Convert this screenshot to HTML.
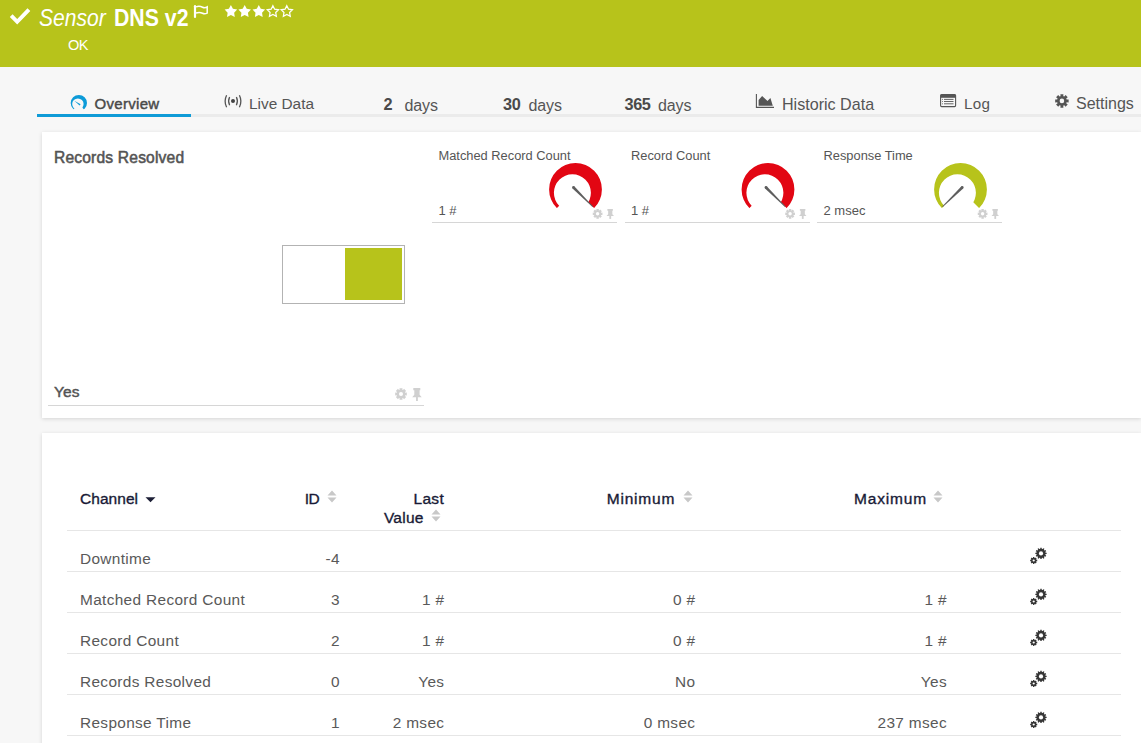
<!DOCTYPE html>
<html><head><meta charset="utf-8"><style>
html,body{margin:0;padding:0;width:1141px;height:743px;overflow:hidden;background:#f7f7f7;font-family:"Liberation Sans", sans-serif;}
.t{position:absolute;line-height:1;white-space:nowrap;}
.o{position:absolute;left:0;top:0;overflow:visible;}
</style></head><body>
<div style="position:absolute;left:0px;top:0px;width:1141px;height:67px;background:#b7c31b"></div>
<svg class="o" width="1141" height="743" viewBox="0 0 1141 743"><path d="M11.2 15.6 L17.2 21.8 L28.9 9.6" fill="none" stroke="#fff" stroke-width="3.9"/></svg>
<div class="t" style="left:39.00px;top:7.23px;font-size:23px;color:#fff;font-weight:normal;font-style:italic;letter-spacing:0px;transform:scaleX(0.915);transform-origin:0 0;">Sensor</div>
<div class="t" style="left:113.50px;top:6.81px;font-size:23.5px;color:#fff;font-weight:bold;font-style:normal;letter-spacing:0px;transform:scaleX(0.905);transform-origin:0 0;">DNS v2</div>
<svg class="o" width="1141" height="743" viewBox="0 0 1141 743"><path d="M195 17 V6.2" stroke="#fff" stroke-width="2.2" stroke-linecap="round"/><path d="M196 6.9 C198.5 6 201 6.5 202.5 7.2 C204 7.9 206 7.6 207.2 6.9 V13.1 C206 13.6 204 13.9 202.5 13.2 C201 12.5 198.5 12.3 196 12.9" fill="none" stroke="#fff" stroke-width="1.5"/></svg>
<svg class="o" width="1141" height="743" viewBox="0 0 1141 743"><polygon points="230.90,5.00 232.92,8.82 237.18,9.56 234.16,12.66 234.78,16.94 230.90,15.03 227.02,16.94 227.64,12.66 224.62,9.56 228.88,8.82" fill="#fff"/><polygon points="244.70,5.00 246.72,8.82 250.98,9.56 247.96,12.66 248.58,16.94 244.70,15.03 240.82,16.94 241.44,12.66 238.42,9.56 242.68,8.82" fill="#fff"/><polygon points="258.80,5.00 260.82,8.82 265.08,9.56 262.06,12.66 262.68,16.94 258.80,15.03 254.92,16.94 255.54,12.66 252.52,9.56 256.78,8.82" fill="#fff"/><polygon points="272.90,5.70 274.63,9.21 278.51,9.78 275.71,12.51 276.37,16.37 272.90,14.55 269.43,16.37 270.09,12.51 267.29,9.78 271.17,9.21" fill="none" stroke="#fff" stroke-width="1.25" stroke-linejoin="miter"/><polygon points="286.80,5.70 288.53,9.21 292.41,9.78 289.61,12.51 290.27,16.37 286.80,14.55 283.33,16.37 283.99,12.51 281.19,9.78 285.07,9.21" fill="none" stroke="#fff" stroke-width="1.25" stroke-linejoin="miter"/></svg>
<div class="t" style="left:68.00px;top:37.64px;font-size:14.6px;color:#fff;font-weight:normal;font-style:normal;letter-spacing:-0.6px;">OK</div>
<div style="position:absolute;left:37px;top:114px;width:1104px;height:3px;background:#ebebeb"></div>
<div style="position:absolute;left:37px;top:114px;width:154px;height:3px;background:#0f9bd7"></div>
<svg class="o" width="1141" height="743" viewBox="0 0 1141 743"><defs><clipPath id="g788_1030"><polygon points="78.85,103.05 94.05,122.51 103.54696969696968,78.3530303030303 54.1530303030303,78.3530303030303 63.65,122.51"/></clipPath></defs><path clip-path="url(#g788_1030)" fill-rule="evenodd" fill="#0d9bd8" d="M70.70 103.05 A8.15 8.15 0 1 1 87.00 103.05 A8.15 8.15 0 1 1 70.70 103.05 Z M72.18 104.10 A5.71 5.71 0 1 1 83.60 104.10 A5.71 5.71 0 1 1 72.18 104.10 Z"/><path d="M74.3 100.8 L80.6 104.3 L79.6 105.6 Z" fill="#0d9bd8"/></svg>
<div class="t" style="left:94.50px;top:96.30px;font-size:15px;color:#4a4a4a;font-weight:normal;font-style:normal;letter-spacing:0.3px;-webkit-text-stroke:0.45px #4a4a4a;">Overview</div>
<svg class="o" width="1141" height="743" viewBox="0 0 1141 743"><circle cx="233" cy="101.1" r="2" fill="#444"/><path d="M229.6 97 Q227.6 101.1 229.6 105.2 M236.4 97 Q238.4 101.1 236.4 105.2 M226.6 95.2 Q223.6 101.2 226.6 107.3 M239.4 95.2 Q242.4 101.2 239.4 107.3" fill="none" stroke="#555" stroke-width="1.3"/></svg>
<div class="t" style="left:249.00px;top:95.96px;font-size:15.4px;color:#555;font-weight:normal;font-style:normal;letter-spacing:0px;">Live Data</div>
<div class="t" style="left:383.60px;top:96.20px;font-size:16.3px;color:#4a4a4a;font-weight:bold;font-style:normal;letter-spacing:0px;">2</div>
<div class="t" style="left:404.50px;top:97.56px;font-size:16px;color:#555;font-weight:normal;font-style:normal;letter-spacing:-0.1px;">days</div>
<div class="t" style="left:503.00px;top:96.20px;font-size:16.3px;color:#4a4a4a;font-weight:bold;font-style:normal;letter-spacing:-0.4px;">30</div>
<div class="t" style="left:528.50px;top:97.56px;font-size:16px;color:#555;font-weight:normal;font-style:normal;letter-spacing:-0.1px;">days</div>
<div class="t" style="left:624.50px;top:96.20px;font-size:16.3px;color:#4a4a4a;font-weight:bold;font-style:normal;letter-spacing:-0.4px;">365</div>
<div class="t" style="left:658.00px;top:97.56px;font-size:16px;color:#555;font-weight:normal;font-style:normal;letter-spacing:-0.1px;">days</div>
<svg class="o" width="1141" height="743" viewBox="0 0 1141 743"><path d="M756.4 93.9 V107.4 H774" fill="none" stroke="#555" stroke-width="1.1"/><polygon points="758.6,105.8 758.6,100 762.1,95.9 767.5,101 770.4,98 772.8,105.8" fill="#555"/></svg>
<div class="t" style="left:782.00px;top:95.67px;font-size:16.1px;color:#555;font-weight:normal;font-style:normal;letter-spacing:0px;">Historic Data</div>
<svg class="o" width="1141" height="743" viewBox="0 0 1141 743"><rect x="940.6" y="94.6" width="15" height="12" rx="1" fill="none" stroke="#555" stroke-width="1.1"/><rect x="940.6" y="94.6" width="15" height="3.2" fill="#555"/><path d="M944 99.4 H953.5 M944 101.5 H953.5 M944 103.8 H953.5" stroke="#555" stroke-width="0.9"/><path d="M942.2 99.4 H943 M942.2 101.5 H943 M942.2 103.8 H943" stroke="#555" stroke-width="0.9"/></svg>
<div class="t" style="left:964.00px;top:96.43px;font-size:15.2px;color:#555;font-weight:normal;font-style:normal;letter-spacing:0.3px;">Log</div>
<svg class="o" width="1141" height="743" viewBox="0 0 1141 743"><path d="M1060.57 96.18 L1060.39 94.17 L1063.41 94.17 L1063.23 96.18 L1063.78 96.37 L1064.29 96.62 L1065.60 95.07 L1067.73 97.20 L1066.18 98.51 L1066.43 99.02 L1066.62 99.57 L1068.63 99.39 L1068.63 102.41 L1066.62 102.23 L1066.43 102.78 L1066.18 103.29 L1067.73 104.60 L1065.60 106.73 L1064.29 105.18 L1063.78 105.43 L1063.23 105.62 L1063.41 107.63 L1060.39 107.63 L1060.57 105.62 L1060.02 105.43 L1059.51 105.18 L1058.20 106.73 L1056.07 104.60 L1057.62 103.29 L1057.37 102.78 L1057.18 102.23 L1055.17 102.41 L1055.17 99.39 L1057.18 99.57 L1057.37 99.02 L1057.62 98.51 L1056.07 97.20 L1058.20 95.07 L1059.51 96.62 L1060.02 96.37 Z" fill="#555"/><circle cx="1061.9" cy="100.9" r="2.3" fill="#f7f7f7"/></svg>
<div class="t" style="left:1076.00px;top:95.76px;font-size:16px;color:#555;font-weight:normal;font-style:normal;letter-spacing:0px;">Settings</div>
<div style="position:absolute;left:42px;top:132px;width:1099px;height:286px;background:#fff;box-shadow:0 1px 4px rgba(0,0,0,0.14)"></div>
<div class="t" style="left:54.00px;top:149.79px;font-size:15.6px;color:#545454;font-weight:normal;font-style:normal;letter-spacing:0.18px;-webkit-text-stroke:0.55px #545454;">Records Resolved</div>
<div style="position:absolute;left:282px;top:245px;width:123px;height:59px;border:1px solid #b3b3b3;box-sizing:border-box;background:#fff"></div>
<div style="position:absolute;left:345px;top:248px;width:57px;height:52px;background:#b7c31b"></div>
<div class="t" style="left:54.00px;top:383.88px;font-size:15.5px;color:#545454;font-weight:normal;font-style:normal;letter-spacing:0.1px;-webkit-text-stroke:0.45px #545454;">Yes</div>
<div style="position:absolute;left:48px;top:405px;width:376px;height:1px;background:#d6d6d6"></div>
<svg class="o" width="1141" height="743" viewBox="0 0 1141 743"><path d="M399.63 389.78 L399.51 388.19 L402.49 388.19 L402.37 389.78 L402.70 389.90 L403.02 390.04 L404.05 388.84 L406.16 390.95 L404.96 391.98 L405.10 392.30 L405.22 392.63 L406.81 392.51 L406.81 395.49 L405.22 395.37 L405.10 395.70 L404.96 396.02 L406.16 397.05 L404.05 399.16 L403.02 397.96 L402.70 398.10 L402.37 398.22 L402.49 399.81 L399.51 399.81 L399.63 398.22 L399.30 398.10 L398.98 397.96 L397.95 399.16 L395.84 397.05 L397.04 396.02 L396.90 395.70 L396.78 395.37 L395.19 395.49 L395.19 392.51 L396.78 392.63 L396.90 392.30 L397.04 391.98 L395.84 390.95 L397.95 388.84 L398.98 390.04 L399.30 389.90 Z" fill="#d0d0d0"/><circle cx="401" cy="394" r="2.04" fill="#fff"/><path d="M413.30 388.1 H420.30 V390.29 H419.60 V394.81 L421.7 397.13 H412.2 L414.30 394.81 V390.29 H413.30 Z" fill="#d0d0d0"/><rect x="416.05" y="396.87" width="1.8" height="4.13" fill="#d0d0d0"/></svg>
<div class="t" style="left:438.50px;top:149.52px;font-size:12.85px;color:#555;font-weight:normal;font-style:normal;letter-spacing:0px;">Matched Record Count</div>
<div class="t" style="left:438.50px;top:204.40px;font-size:13px;color:#555;font-weight:normal;font-style:normal;letter-spacing:0px;">1 #</div>
<div style="position:absolute;left:432.0px;top:222px;width:185px;height:1px;background:#d6d6d6"></div>
<svg class="o" width="1141" height="743" viewBox="0 0 1141 743"><defs><clipPath id="g5755_1894"><polygon points="575.5,189.4 632.07,245.97 655.5,109.4 495.5,109.4 518.93,245.97"/></clipPath></defs><path clip-path="url(#g5755_1894)" fill-rule="evenodd" fill="#e20613" d="M549.10 189.4 A26.4 26.4 0 1 1 601.90 189.4 A26.4 26.4 0 1 1 549.10 189.4 Z M553.90 192.80 A18.50 18.50 0 1 1 590.90 192.80 A18.50 18.50 0 1 1 553.90 192.80 Z"/><polygon points="572.51,188.49 592.48,207.12 593.12,206.48 574.49,186.51" fill="#5e5e5e"/><circle cx="573.5" cy="187.5" r="1.4" fill="#5e5e5e"/></svg>
<svg class="o" width="1141" height="743" viewBox="0 0 1141 743"><path d="M596.46 210.28 L596.36 208.96 L598.84 208.96 L598.74 210.28 L599.02 210.38 L599.28 210.50 L600.15 209.50 L601.90 211.25 L600.90 212.12 L601.02 212.38 L601.12 212.66 L602.44 212.56 L602.44 215.04 L601.12 214.94 L601.02 215.22 L600.90 215.48 L601.90 216.35 L600.15 218.10 L599.28 217.10 L599.02 217.22 L598.74 217.32 L598.84 218.64 L596.36 218.64 L596.46 217.32 L596.18 217.22 L595.92 217.10 L595.05 218.10 L593.30 216.35 L594.30 215.48 L594.18 215.22 L594.08 214.94 L592.76 215.04 L592.76 212.56 L594.08 212.66 L594.18 212.38 L594.30 212.12 L593.30 211.25 L595.05 209.50 L595.92 210.50 L596.18 210.38 Z" fill="#d0d0d0"/><circle cx="597.6" cy="213.8" r="1.7000000000000002" fill="#fff"/><path d="M607.37 209 H612.89 V210.68 H612.34 V214.15 L614.0 215.93 H606.5 L608.16 214.15 V210.68 H607.37 Z" fill="#d0d0d0"/><rect x="609.35" y="215.73" width="1.8" height="3.17" fill="#d0d0d0"/></svg>
<div class="t" style="left:631.00px;top:149.52px;font-size:12.85px;color:#555;font-weight:normal;font-style:normal;letter-spacing:0px;">Record Count</div>
<div class="t" style="left:631.00px;top:204.40px;font-size:13px;color:#555;font-weight:normal;font-style:normal;letter-spacing:0px;">1 #</div>
<div style="position:absolute;left:624.5px;top:222px;width:185px;height:1px;background:#d6d6d6"></div>
<svg class="o" width="1141" height="743" viewBox="0 0 1141 743"><defs><clipPath id="g7680_1894"><polygon points="768,189.4 824.57,245.97 848.0,109.4 688.0,109.4 711.43,245.97"/></clipPath></defs><path clip-path="url(#g7680_1894)" fill-rule="evenodd" fill="#e20613" d="M741.60 189.4 A26.4 26.4 0 1 1 794.40 189.4 A26.4 26.4 0 1 1 741.60 189.4 Z M746.40 192.80 A18.50 18.50 0 1 1 783.40 192.80 A18.50 18.50 0 1 1 746.40 192.80 Z"/><polygon points="765.01,188.49 784.98,207.12 785.62,206.48 766.99,186.51" fill="#5e5e5e"/><circle cx="766" cy="187.5" r="1.4" fill="#5e5e5e"/></svg>
<svg class="o" width="1141" height="743" viewBox="0 0 1141 743"><path d="M788.96 210.28 L788.86 208.96 L791.34 208.96 L791.24 210.28 L791.52 210.38 L791.78 210.50 L792.65 209.50 L794.40 211.25 L793.40 212.12 L793.52 212.38 L793.62 212.66 L794.94 212.56 L794.94 215.04 L793.62 214.94 L793.52 215.22 L793.40 215.48 L794.40 216.35 L792.65 218.10 L791.78 217.10 L791.52 217.22 L791.24 217.32 L791.34 218.64 L788.86 218.64 L788.96 217.32 L788.68 217.22 L788.42 217.10 L787.55 218.10 L785.80 216.35 L786.80 215.48 L786.68 215.22 L786.58 214.94 L785.26 215.04 L785.26 212.56 L786.58 212.66 L786.68 212.38 L786.80 212.12 L785.80 211.25 L787.55 209.50 L788.42 210.50 L788.68 210.38 Z" fill="#d0d0d0"/><circle cx="790.1" cy="213.8" r="1.7000000000000002" fill="#fff"/><path d="M799.87 209 H805.39 V210.68 H804.84 V214.15 L806.5 215.93 H799 L800.66 214.15 V210.68 H799.87 Z" fill="#d0d0d0"/><rect x="801.85" y="215.73" width="1.8" height="3.17" fill="#d0d0d0"/></svg>
<div class="t" style="left:823.50px;top:149.52px;font-size:12.85px;color:#555;font-weight:normal;font-style:normal;letter-spacing:0px;">Response Time</div>
<div class="t" style="left:823.50px;top:204.40px;font-size:13px;color:#555;font-weight:normal;font-style:normal;letter-spacing:0px;">2 msec</div>
<div style="position:absolute;left:817.0px;top:222px;width:185px;height:1px;background:#d6d6d6"></div>
<svg class="o" width="1141" height="743" viewBox="0 0 1141 743"><defs><clipPath id="g9605_1894"><polygon points="960.5,189.4 1017.07,245.97 1040.5,109.4 880.5,109.4 903.93,245.97"/></clipPath></defs><path clip-path="url(#g9605_1894)" fill-rule="evenodd" fill="#b7c31b" d="M934.10 189.4 A26.4 26.4 0 1 1 986.90 189.4 A26.4 26.4 0 1 1 934.10 189.4 Z M938.90 192.80 A18.50 18.50 0 1 1 975.90 192.80 A18.50 18.50 0 1 1 938.90 192.80 Z"/><polygon points="961.22,186.50 942.19,206.48 942.81,207.12 963.18,188.50" fill="#5e5e5e"/><circle cx="962.2" cy="187.5" r="1.4" fill="#5e5e5e"/></svg>
<svg class="o" width="1141" height="743" viewBox="0 0 1141 743"><path d="M981.46 210.28 L981.36 208.96 L983.84 208.96 L983.74 210.28 L984.02 210.38 L984.28 210.50 L985.15 209.50 L986.90 211.25 L985.90 212.12 L986.02 212.38 L986.12 212.66 L987.44 212.56 L987.44 215.04 L986.12 214.94 L986.02 215.22 L985.90 215.48 L986.90 216.35 L985.15 218.10 L984.28 217.10 L984.02 217.22 L983.74 217.32 L983.84 218.64 L981.36 218.64 L981.46 217.32 L981.18 217.22 L980.92 217.10 L980.05 218.10 L978.30 216.35 L979.30 215.48 L979.18 215.22 L979.08 214.94 L977.76 215.04 L977.76 212.56 L979.08 212.66 L979.18 212.38 L979.30 212.12 L978.30 211.25 L980.05 209.50 L980.92 210.50 L981.18 210.38 Z" fill="#d0d0d0"/><circle cx="982.6" cy="213.8" r="1.7000000000000002" fill="#fff"/><path d="M992.37 209 H997.89 V210.68 H997.34 V214.15 L999.0 215.93 H991.5 L993.16 214.15 V210.68 H992.37 Z" fill="#d0d0d0"/><rect x="994.35" y="215.73" width="1.8" height="3.17" fill="#d0d0d0"/></svg>
<div style="position:absolute;left:42px;top:433px;width:1099px;height:320px;background:#fff;box-shadow:0 1px 4px rgba(0,0,0,0.14)"></div>
<div class="t" style="left:80.00px;top:490.88px;font-size:15.5px;color:#181a36;font-weight:normal;font-style:normal;letter-spacing:0.05px;-webkit-text-stroke:0.35px #181a36;">Channel</div>
<svg class="o" width="1141" height="743" viewBox="0 0 1141 743"><path d="M145.5 497.3 H155.5 L150.5 502.3 Z" fill="#1d1f36"/></svg>
<div class="t" style="left:304.80px;top:490.88px;font-size:15.5px;color:#181a36;font-weight:normal;font-style:normal;letter-spacing:-0.5px;-webkit-text-stroke:0.35px #181a36;">ID</div>
<div class="t" style="right:697.00px;top:490.58px;font-size:15.5px;color:#181a36;font-weight:normal;font-style:normal;letter-spacing:0.3px;-webkit-text-stroke:0.35px #181a36;">Last</div>
<div class="t" style="right:717.40px;top:509.58px;font-size:15.5px;color:#181a36;font-weight:normal;font-style:normal;letter-spacing:0.24px;-webkit-text-stroke:0.35px #181a36;">Value</div>
<div class="t" style="left:606.70px;top:490.88px;font-size:15.5px;color:#181a36;font-weight:normal;font-style:normal;letter-spacing:0.8px;-webkit-text-stroke:0.35px #181a36;">Minimum</div>
<div class="t" style="left:854.00px;top:490.88px;font-size:15.5px;color:#181a36;font-weight:normal;font-style:normal;letter-spacing:0.83px;-webkit-text-stroke:0.35px #181a36;">Maximum</div>
<svg class="o" width="1141" height="743" viewBox="0 0 1141 743"><path d="M332 490.5 L336.5 495.5 H327.5 Z M332 502.5 L336.5 497.5 H327.5 Z" fill="#c8c8c8"/><path d="M436 509.5 L440.5 514.5 H431.5 Z M436 521.5 L440.5 516.5 H431.5 Z" fill="#c8c8c8"/><path d="M688 490.5 L692.5 495.5 H683.5 Z M688 502.5 L692.5 497.5 H683.5 Z" fill="#c8c8c8"/><path d="M938 490.5 L942.5 495.5 H933.5 Z M938 502.5 L942.5 497.5 H933.5 Z" fill="#c8c8c8"/></svg>
<div style="position:absolute;left:67px;top:530px;width:1054px;height:1px;background:#e6e6e6"></div>
<div style="position:absolute;left:67px;top:571px;width:1054px;height:1px;background:#e6e6e6"></div>
<div style="position:absolute;left:67px;top:612px;width:1054px;height:1px;background:#e6e6e6"></div>
<div style="position:absolute;left:67px;top:653px;width:1054px;height:1px;background:#e6e6e6"></div>
<div style="position:absolute;left:67px;top:694px;width:1054px;height:1px;background:#e6e6e6"></div>
<div style="position:absolute;left:67px;top:735px;width:1054px;height:1px;background:#e6e6e6"></div>
<div class="t" style="left:80.00px;top:551.16px;font-size:15.4px;color:#595959;font-weight:normal;font-style:normal;letter-spacing:0.34px;">Downtime</div>
<div class="t" style="right:801.06px;top:551.16px;font-size:15.4px;color:#595959;font-weight:normal;font-style:normal;letter-spacing:0.34px;">-4</div>
<div class="t" style="right:696.66px;top:551.16px;font-size:15.4px;color:#595959;font-weight:normal;font-style:normal;letter-spacing:0.34px;"></div>
<div class="t" style="right:445.66px;top:551.16px;font-size:15.4px;color:#595959;font-weight:normal;font-style:normal;letter-spacing:0.34px;"></div>
<div class="t" style="right:194.06px;top:551.16px;font-size:15.4px;color:#595959;font-weight:normal;font-style:normal;letter-spacing:0.34px;"></div>
<div class="t" style="left:80.00px;top:592.16px;font-size:15.4px;color:#595959;font-weight:normal;font-style:normal;letter-spacing:0.34px;">Matched Record Count</div>
<div class="t" style="right:801.06px;top:592.16px;font-size:15.4px;color:#595959;font-weight:normal;font-style:normal;letter-spacing:0.34px;">3</div>
<div class="t" style="right:696.66px;top:592.16px;font-size:15.4px;color:#595959;font-weight:normal;font-style:normal;letter-spacing:0.34px;">1 #</div>
<div class="t" style="right:445.66px;top:592.16px;font-size:15.4px;color:#595959;font-weight:normal;font-style:normal;letter-spacing:0.34px;">0 #</div>
<div class="t" style="right:194.06px;top:592.16px;font-size:15.4px;color:#595959;font-weight:normal;font-style:normal;letter-spacing:0.34px;">1 #</div>
<div class="t" style="left:80.00px;top:633.16px;font-size:15.4px;color:#595959;font-weight:normal;font-style:normal;letter-spacing:0.34px;">Record Count</div>
<div class="t" style="right:801.06px;top:633.16px;font-size:15.4px;color:#595959;font-weight:normal;font-style:normal;letter-spacing:0.34px;">2</div>
<div class="t" style="right:696.66px;top:633.16px;font-size:15.4px;color:#595959;font-weight:normal;font-style:normal;letter-spacing:0.34px;">1 #</div>
<div class="t" style="right:445.66px;top:633.16px;font-size:15.4px;color:#595959;font-weight:normal;font-style:normal;letter-spacing:0.34px;">0 #</div>
<div class="t" style="right:194.06px;top:633.16px;font-size:15.4px;color:#595959;font-weight:normal;font-style:normal;letter-spacing:0.34px;">1 #</div>
<div class="t" style="left:80.00px;top:674.16px;font-size:15.4px;color:#595959;font-weight:normal;font-style:normal;letter-spacing:0.34px;">Records Resolved</div>
<div class="t" style="right:801.06px;top:674.16px;font-size:15.4px;color:#595959;font-weight:normal;font-style:normal;letter-spacing:0.34px;">0</div>
<div class="t" style="right:696.66px;top:674.16px;font-size:15.4px;color:#595959;font-weight:normal;font-style:normal;letter-spacing:0.34px;">Yes</div>
<div class="t" style="right:445.66px;top:674.16px;font-size:15.4px;color:#595959;font-weight:normal;font-style:normal;letter-spacing:0.34px;">No</div>
<div class="t" style="right:194.06px;top:674.16px;font-size:15.4px;color:#595959;font-weight:normal;font-style:normal;letter-spacing:0.34px;">Yes</div>
<div class="t" style="left:80.00px;top:715.16px;font-size:15.4px;color:#595959;font-weight:normal;font-style:normal;letter-spacing:0.34px;">Response Time</div>
<div class="t" style="right:801.06px;top:715.16px;font-size:15.4px;color:#595959;font-weight:normal;font-style:normal;letter-spacing:0.34px;">1</div>
<div class="t" style="right:696.66px;top:715.16px;font-size:15.4px;color:#595959;font-weight:normal;font-style:normal;letter-spacing:0.34px;">2 msec</div>
<div class="t" style="right:445.66px;top:715.16px;font-size:15.4px;color:#595959;font-weight:normal;font-style:normal;letter-spacing:0.34px;">0 msec</div>
<div class="t" style="right:194.06px;top:715.16px;font-size:15.4px;color:#595959;font-weight:normal;font-style:normal;letter-spacing:0.34px;">237 msec</div>
<svg class="o" width="1141" height="743" viewBox="0 0 1141 743"><path d="M1040.28 548.86 L1040.29 547.74 L1041.71 547.74 L1041.72 548.86 L1042.19 548.96 L1042.65 549.11 L1043.21 548.15 L1044.45 548.86 L1043.89 549.83 L1044.25 550.15 L1044.57 550.51 L1045.54 549.95 L1046.25 551.19 L1045.29 551.75 L1045.44 552.21 L1045.54 552.68 L1046.66 552.69 L1046.66 554.11 L1045.54 554.12 L1045.44 554.59 L1045.29 555.05 L1046.25 555.61 L1045.54 556.85 L1044.57 556.29 L1044.25 556.65 L1043.89 556.97 L1044.45 557.94 L1043.21 558.65 L1042.65 557.69 L1042.19 557.84 L1041.72 557.94 L1041.71 559.06 L1040.29 559.06 L1040.28 557.94 L1039.81 557.84 L1039.35 557.69 L1038.79 558.65 L1037.55 557.94 L1038.11 556.97 L1037.75 556.65 L1037.43 556.29 L1036.46 556.85 L1035.75 555.61 L1036.71 555.05 L1036.56 554.59 L1036.46 554.12 L1035.34 554.11 L1035.34 552.69 L1036.46 552.68 L1036.56 552.21 L1036.71 551.75 L1035.75 551.19 L1036.46 549.95 L1037.43 550.51 L1037.75 550.15 L1038.11 549.83 L1037.55 548.86 L1038.79 548.15 L1039.35 549.11 L1039.81 548.96 Z" fill="#363636"/><circle cx="1041" cy="553.4" r="2.1" fill="#fff"/><path d="M1033.05 557.78 L1033.03 556.96 L1034.37 556.96 L1034.35 557.78 L1034.77 557.91 L1035.16 558.11 L1035.72 557.52 L1036.68 558.48 L1036.09 559.04 L1036.29 559.43 L1036.42 559.85 L1037.24 559.83 L1037.24 561.17 L1036.42 561.15 L1036.29 561.57 L1036.09 561.96 L1036.68 562.52 L1035.72 563.48 L1035.16 562.89 L1034.77 563.09 L1034.35 563.22 L1034.37 564.04 L1033.03 564.04 L1033.05 563.22 L1032.63 563.09 L1032.24 562.89 L1031.68 563.48 L1030.72 562.52 L1031.31 561.96 L1031.11 561.57 L1030.98 561.15 L1030.16 561.17 L1030.16 559.83 L1030.98 559.85 L1031.11 559.43 L1031.31 559.04 L1030.72 558.48 L1031.68 557.52 L1032.24 558.11 L1032.63 557.91 Z" fill="#363636"/><circle cx="1033.7" cy="560.5" r="1.1" fill="#fff"/><path d="M1040.28 589.86 L1040.29 588.74 L1041.71 588.74 L1041.72 589.86 L1042.19 589.96 L1042.65 590.11 L1043.21 589.15 L1044.45 589.86 L1043.89 590.83 L1044.25 591.15 L1044.57 591.51 L1045.54 590.95 L1046.25 592.19 L1045.29 592.75 L1045.44 593.21 L1045.54 593.68 L1046.66 593.69 L1046.66 595.11 L1045.54 595.12 L1045.44 595.59 L1045.29 596.05 L1046.25 596.61 L1045.54 597.85 L1044.57 597.29 L1044.25 597.65 L1043.89 597.97 L1044.45 598.94 L1043.21 599.65 L1042.65 598.69 L1042.19 598.84 L1041.72 598.94 L1041.71 600.06 L1040.29 600.06 L1040.28 598.94 L1039.81 598.84 L1039.35 598.69 L1038.79 599.65 L1037.55 598.94 L1038.11 597.97 L1037.75 597.65 L1037.43 597.29 L1036.46 597.85 L1035.75 596.61 L1036.71 596.05 L1036.56 595.59 L1036.46 595.12 L1035.34 595.11 L1035.34 593.69 L1036.46 593.68 L1036.56 593.21 L1036.71 592.75 L1035.75 592.19 L1036.46 590.95 L1037.43 591.51 L1037.75 591.15 L1038.11 590.83 L1037.55 589.86 L1038.79 589.15 L1039.35 590.11 L1039.81 589.96 Z" fill="#363636"/><circle cx="1041" cy="594.4" r="2.1" fill="#fff"/><path d="M1033.05 598.78 L1033.03 597.96 L1034.37 597.96 L1034.35 598.78 L1034.77 598.91 L1035.16 599.11 L1035.72 598.52 L1036.68 599.48 L1036.09 600.04 L1036.29 600.43 L1036.42 600.85 L1037.24 600.83 L1037.24 602.17 L1036.42 602.15 L1036.29 602.57 L1036.09 602.96 L1036.68 603.52 L1035.72 604.48 L1035.16 603.89 L1034.77 604.09 L1034.35 604.22 L1034.37 605.04 L1033.03 605.04 L1033.05 604.22 L1032.63 604.09 L1032.24 603.89 L1031.68 604.48 L1030.72 603.52 L1031.31 602.96 L1031.11 602.57 L1030.98 602.15 L1030.16 602.17 L1030.16 600.83 L1030.98 600.85 L1031.11 600.43 L1031.31 600.04 L1030.72 599.48 L1031.68 598.52 L1032.24 599.11 L1032.63 598.91 Z" fill="#363636"/><circle cx="1033.7" cy="601.5" r="1.1" fill="#fff"/><path d="M1040.28 630.86 L1040.29 629.74 L1041.71 629.74 L1041.72 630.86 L1042.19 630.96 L1042.65 631.11 L1043.21 630.15 L1044.45 630.86 L1043.89 631.83 L1044.25 632.15 L1044.57 632.51 L1045.54 631.95 L1046.25 633.19 L1045.29 633.75 L1045.44 634.21 L1045.54 634.68 L1046.66 634.69 L1046.66 636.11 L1045.54 636.12 L1045.44 636.59 L1045.29 637.05 L1046.25 637.61 L1045.54 638.85 L1044.57 638.29 L1044.25 638.65 L1043.89 638.97 L1044.45 639.94 L1043.21 640.65 L1042.65 639.69 L1042.19 639.84 L1041.72 639.94 L1041.71 641.06 L1040.29 641.06 L1040.28 639.94 L1039.81 639.84 L1039.35 639.69 L1038.79 640.65 L1037.55 639.94 L1038.11 638.97 L1037.75 638.65 L1037.43 638.29 L1036.46 638.85 L1035.75 637.61 L1036.71 637.05 L1036.56 636.59 L1036.46 636.12 L1035.34 636.11 L1035.34 634.69 L1036.46 634.68 L1036.56 634.21 L1036.71 633.75 L1035.75 633.19 L1036.46 631.95 L1037.43 632.51 L1037.75 632.15 L1038.11 631.83 L1037.55 630.86 L1038.79 630.15 L1039.35 631.11 L1039.81 630.96 Z" fill="#363636"/><circle cx="1041" cy="635.4" r="2.1" fill="#fff"/><path d="M1033.05 639.78 L1033.03 638.96 L1034.37 638.96 L1034.35 639.78 L1034.77 639.91 L1035.16 640.11 L1035.72 639.52 L1036.68 640.48 L1036.09 641.04 L1036.29 641.43 L1036.42 641.85 L1037.24 641.83 L1037.24 643.17 L1036.42 643.15 L1036.29 643.57 L1036.09 643.96 L1036.68 644.52 L1035.72 645.48 L1035.16 644.89 L1034.77 645.09 L1034.35 645.22 L1034.37 646.04 L1033.03 646.04 L1033.05 645.22 L1032.63 645.09 L1032.24 644.89 L1031.68 645.48 L1030.72 644.52 L1031.31 643.96 L1031.11 643.57 L1030.98 643.15 L1030.16 643.17 L1030.16 641.83 L1030.98 641.85 L1031.11 641.43 L1031.31 641.04 L1030.72 640.48 L1031.68 639.52 L1032.24 640.11 L1032.63 639.91 Z" fill="#363636"/><circle cx="1033.7" cy="642.5" r="1.1" fill="#fff"/><path d="M1040.28 671.86 L1040.29 670.74 L1041.71 670.74 L1041.72 671.86 L1042.19 671.96 L1042.65 672.11 L1043.21 671.15 L1044.45 671.86 L1043.89 672.83 L1044.25 673.15 L1044.57 673.51 L1045.54 672.95 L1046.25 674.19 L1045.29 674.75 L1045.44 675.21 L1045.54 675.68 L1046.66 675.69 L1046.66 677.11 L1045.54 677.12 L1045.44 677.59 L1045.29 678.05 L1046.25 678.61 L1045.54 679.85 L1044.57 679.29 L1044.25 679.65 L1043.89 679.97 L1044.45 680.94 L1043.21 681.65 L1042.65 680.69 L1042.19 680.84 L1041.72 680.94 L1041.71 682.06 L1040.29 682.06 L1040.28 680.94 L1039.81 680.84 L1039.35 680.69 L1038.79 681.65 L1037.55 680.94 L1038.11 679.97 L1037.75 679.65 L1037.43 679.29 L1036.46 679.85 L1035.75 678.61 L1036.71 678.05 L1036.56 677.59 L1036.46 677.12 L1035.34 677.11 L1035.34 675.69 L1036.46 675.68 L1036.56 675.21 L1036.71 674.75 L1035.75 674.19 L1036.46 672.95 L1037.43 673.51 L1037.75 673.15 L1038.11 672.83 L1037.55 671.86 L1038.79 671.15 L1039.35 672.11 L1039.81 671.96 Z" fill="#363636"/><circle cx="1041" cy="676.4" r="2.1" fill="#fff"/><path d="M1033.05 680.78 L1033.03 679.96 L1034.37 679.96 L1034.35 680.78 L1034.77 680.91 L1035.16 681.11 L1035.72 680.52 L1036.68 681.48 L1036.09 682.04 L1036.29 682.43 L1036.42 682.85 L1037.24 682.83 L1037.24 684.17 L1036.42 684.15 L1036.29 684.57 L1036.09 684.96 L1036.68 685.52 L1035.72 686.48 L1035.16 685.89 L1034.77 686.09 L1034.35 686.22 L1034.37 687.04 L1033.03 687.04 L1033.05 686.22 L1032.63 686.09 L1032.24 685.89 L1031.68 686.48 L1030.72 685.52 L1031.31 684.96 L1031.11 684.57 L1030.98 684.15 L1030.16 684.17 L1030.16 682.83 L1030.98 682.85 L1031.11 682.43 L1031.31 682.04 L1030.72 681.48 L1031.68 680.52 L1032.24 681.11 L1032.63 680.91 Z" fill="#363636"/><circle cx="1033.7" cy="683.5" r="1.1" fill="#fff"/><path d="M1040.28 712.86 L1040.29 711.74 L1041.71 711.74 L1041.72 712.86 L1042.19 712.96 L1042.65 713.11 L1043.21 712.15 L1044.45 712.86 L1043.89 713.83 L1044.25 714.15 L1044.57 714.51 L1045.54 713.95 L1046.25 715.19 L1045.29 715.75 L1045.44 716.21 L1045.54 716.68 L1046.66 716.69 L1046.66 718.11 L1045.54 718.12 L1045.44 718.59 L1045.29 719.05 L1046.25 719.61 L1045.54 720.85 L1044.57 720.29 L1044.25 720.65 L1043.89 720.97 L1044.45 721.94 L1043.21 722.65 L1042.65 721.69 L1042.19 721.84 L1041.72 721.94 L1041.71 723.06 L1040.29 723.06 L1040.28 721.94 L1039.81 721.84 L1039.35 721.69 L1038.79 722.65 L1037.55 721.94 L1038.11 720.97 L1037.75 720.65 L1037.43 720.29 L1036.46 720.85 L1035.75 719.61 L1036.71 719.05 L1036.56 718.59 L1036.46 718.12 L1035.34 718.11 L1035.34 716.69 L1036.46 716.68 L1036.56 716.21 L1036.71 715.75 L1035.75 715.19 L1036.46 713.95 L1037.43 714.51 L1037.75 714.15 L1038.11 713.83 L1037.55 712.86 L1038.79 712.15 L1039.35 713.11 L1039.81 712.96 Z" fill="#363636"/><circle cx="1041" cy="717.4" r="2.1" fill="#fff"/><path d="M1033.05 721.78 L1033.03 720.96 L1034.37 720.96 L1034.35 721.78 L1034.77 721.91 L1035.16 722.11 L1035.72 721.52 L1036.68 722.48 L1036.09 723.04 L1036.29 723.43 L1036.42 723.85 L1037.24 723.83 L1037.24 725.17 L1036.42 725.15 L1036.29 725.57 L1036.09 725.96 L1036.68 726.52 L1035.72 727.48 L1035.16 726.89 L1034.77 727.09 L1034.35 727.22 L1034.37 728.04 L1033.03 728.04 L1033.05 727.22 L1032.63 727.09 L1032.24 726.89 L1031.68 727.48 L1030.72 726.52 L1031.31 725.96 L1031.11 725.57 L1030.98 725.15 L1030.16 725.17 L1030.16 723.83 L1030.98 723.85 L1031.11 723.43 L1031.31 723.04 L1030.72 722.48 L1031.68 721.52 L1032.24 722.11 L1032.63 721.91 Z" fill="#363636"/><circle cx="1033.7" cy="724.5" r="1.1" fill="#fff"/></svg>
</body></html>
